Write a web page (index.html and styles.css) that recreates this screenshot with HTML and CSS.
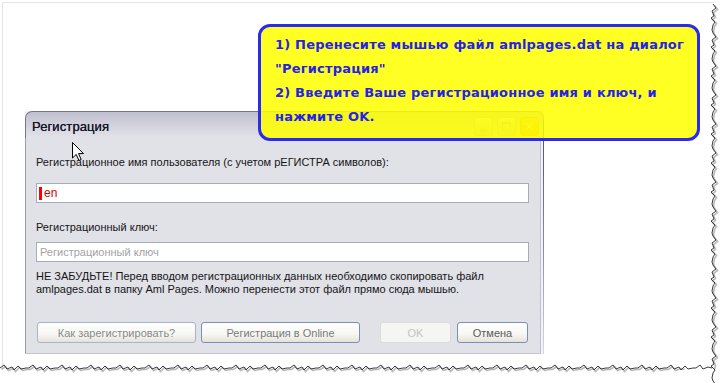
FILE: index.html
```html
<!DOCTYPE html>
<html lang="ru">
<head>
<meta charset="utf-8">
<title>Регистрация</title>
<link rel="stylesheet" href="styles.css">
</head>
<body>
<div class="page">
  <div class="paper">
    <div class="dialog">
      <div class="titlebar">
        <span class="title">Регистрация</span>
        <div class="tb-buttons">
          <span class="tb tb-min"><i></i></span>
          <span class="tb tb-max"><i></i></span>
          <span class="tb tb-close">✕</span>
        </div>
      </div>
      <div class="dlg-body">
        <div class="label">Регистрационное имя пользователя (с учетом рЕГИСТРА символов):</div>
        <div class="input input-name"><span class="caret"></span><span class="value">en</span></div>
        <div class="label label-key">Регистрационный ключ:</div>
        <div class="input input-key"><span class="placeholder">Регистрационный ключ</span></div>
        <p class="notice">НЕ ЗАБУДЬТЕ! Перед вводом регистрационных данных необходимо скопировать файл<br>amlpages.dat в папку Aml Pages. Можно перенести этот файл прямо сюда мышью.</p>
        <div class="buttons">
          <span class="btn btn-how">Как зарегистрировать?</span>
          <span class="btn btn-online">Регистрация в Online</span>
          <span class="btn btn-ok">OK</span>
          <span class="btn btn-cancel">Отмена</span>
        </div>
      </div>
    </div>
  </div>

  <div class="callout">
    <p>1) Перенесите мышью файл amlpages.dat на диалог<br>"Регистрация"<br>2) Введите Ваше регистрационное имя и ключ, и<br>нажмите OK.</p>
  </div>

  <svg class="cursor" width="13" height="20" viewBox="0 0 13 20">
    <path d="M0.5 0.5 L0.5 16 L4.2 12.5 L7 18.5 L9.2 17.5 L6.5 11.6 L11.5 11.6 Z" fill="#fff" stroke="#000" stroke-width="1"/>
  </svg>

  <svg class="torn" width="726" height="383" viewBox="0 0 726 383">
    <g transform="translate(1.5 1.5)" fill="none" stroke="#9a9a9a" stroke-width="1.6" opacity="0.7">
      <path d="M0 368 l4 -3 l3 4 l5 -2 l2 3 l4 -4 l3 3 l5 -1 l3 0 l4 -3 l3 4 l5 -2 l2 3 l4 -4 l3 3 l5 -1 l3 0 l4 -3 l3 4 l5 -2 l2 3 l4 -4 l3 3 l5 -1 l3 0 l4 -3 l3 4 l5 -2 l2 3 l4 -4 l3 3 l5 -1 l3 0 l4 -3 l3 4 l5 -2 l2 3 l4 -4 l3 3 l5 -1 l3 0 l4 -3 l3 4 l5 -2 l2 3 l4 -4 l3 3 l5 -1 l3 0 l4 -3 l3 4 l5 -2 l2 3 l4 -4 l3 3 l5 -1 l3 0 l4 -3 l3 4 l5 -2 l2 3 l4 -4 l3 3 l5 -1 l3 0 l4 -3 l3 4 l5 -2 l2 3 l4 -4 l3 3 l5 -1 l3 0 l4 -3 l3 4 l5 -2 l2 3 l4 -4 l3 3 l5 -1 l3 0 l4 -3 l3 4 l5 -2 l2 3 l4 -4 l3 3 l5 -1 l3 0 l4 -3 l3 4 l5 -2 l2 3 l4 -4 l3 3 l5 -1 l3 0 l4 -3 l3 4 l5 -2 l2 3 l4 -4 l3 3 l5 -1 l3 0 l4 -3 l3 4 l5 -2 l2 3 l4 -4 l3 3 l5 -1 l3 0 l4 -3 l3 4 l5 -2 l2 3 l4 -4 l3 3 l5 -1 l3 0 l4 -3 l3 4 l5 -2 l2 3 l4 -4 l3 3 l5 -1 l3 0 l4 -3 l3 4 l5 -2 l2 3 l4 -4 l3 3 l5 -1 l3 0 l4 -3 l3 4 l5 -2 l2 3 l4 -4 l3 3 l5 -1 l3 0 l4 -3 l3 4 l5 -2 l2 3 l4 -4 l3 3 l5 -1 l3 0 l4 -3 l3 4 l5 -2 l2 3 l4 -4 l3 3 l5 -1 l3 0 l4 -3 l3 4 l5 -2 l2 3 l4 -4 l3 3 l5 -1 l3 0 l4 -3 l3 4 l5 -2 l2 3 l4 -4 l3 3 l5 -1 l3 0 l4 -3 l3 4 l5 -2 l2 3 l4 -4 l3 3 l5 -1 l3 0 l4 -3 l3 4 l5 -2 l4 1"/>
      <path d="M713 4 l3 4 l-4 3 l2 5 l-3 2 l4 4 l-2 3 l-1 5 l1 3 l3 4 l-4 3 l2 5 l-3 2 l4 4 l-2 3 l-1 5 l1 3 l3 4 l-4 3 l2 5 l-3 2 l4 4 l-2 3 l-1 5 l1 3 l3 4 l-4 3 l2 5 l-3 2 l4 4 l-2 3 l-1 5 l1 3 l3 4 l-4 3 l2 5 l-3 2 l4 4 l-2 3 l-1 5 l1 3 l3 4 l-4 3 l2 5 l-3 2 l4 4 l-2 3 l-1 5 l1 3 l3 4 l-4 3 l2 5 l-3 2 l4 4 l-2 3 l-1 5 l1 3 l3 4 l-4 3 l2 5 l-3 2 l4 4 l-2 3 l-1 5 l1 3 l3 4 l-4 3 l2 5 l-3 2 l4 4 l-2 3 l-1 5 l1 3 l3 4 l-4 3 l2 5 l-3 2 l4 4 l-2 3 l-1 5 l1 3 l3 4 l-4 3 l2 5 l-3 2 l4 4 l-2 3 l-1 5 l1 3 l3 4 l-4 3 l2 5 l-3 2 l4 4 l-2 3 l-1 5 l1 3 l3 4 l-4 3 l2 5 l-1 4"/>
    </g>
    <g fill="none" stroke="#3a3a3a" stroke-width="1">
      <path d="M0 368 l4 -3 l3 4 l5 -2 l2 3 l4 -4 l3 3 l5 -1 l3 0 l4 -3 l3 4 l5 -2 l2 3 l4 -4 l3 3 l5 -1 l3 0 l4 -3 l3 4 l5 -2 l2 3 l4 -4 l3 3 l5 -1 l3 0 l4 -3 l3 4 l5 -2 l2 3 l4 -4 l3 3 l5 -1 l3 0 l4 -3 l3 4 l5 -2 l2 3 l4 -4 l3 3 l5 -1 l3 0 l4 -3 l3 4 l5 -2 l2 3 l4 -4 l3 3 l5 -1 l3 0 l4 -3 l3 4 l5 -2 l2 3 l4 -4 l3 3 l5 -1 l3 0 l4 -3 l3 4 l5 -2 l2 3 l4 -4 l3 3 l5 -1 l3 0 l4 -3 l3 4 l5 -2 l2 3 l4 -4 l3 3 l5 -1 l3 0 l4 -3 l3 4 l5 -2 l2 3 l4 -4 l3 3 l5 -1 l3 0 l4 -3 l3 4 l5 -2 l2 3 l4 -4 l3 3 l5 -1 l3 0 l4 -3 l3 4 l5 -2 l2 3 l4 -4 l3 3 l5 -1 l3 0 l4 -3 l3 4 l5 -2 l2 3 l4 -4 l3 3 l5 -1 l3 0 l4 -3 l3 4 l5 -2 l2 3 l4 -4 l3 3 l5 -1 l3 0 l4 -3 l3 4 l5 -2 l2 3 l4 -4 l3 3 l5 -1 l3 0 l4 -3 l3 4 l5 -2 l2 3 l4 -4 l3 3 l5 -1 l3 0 l4 -3 l3 4 l5 -2 l2 3 l4 -4 l3 3 l5 -1 l3 0 l4 -3 l3 4 l5 -2 l2 3 l4 -4 l3 3 l5 -1 l3 0 l4 -3 l3 4 l5 -2 l2 3 l4 -4 l3 3 l5 -1 l3 0 l4 -3 l3 4 l5 -2 l2 3 l4 -4 l3 3 l5 -1 l3 0 l4 -3 l3 4 l5 -2 l2 3 l4 -4 l3 3 l5 -1 l3 0 l4 -3 l3 4 l5 -2 l2 3 l4 -4 l3 3 l5 -1 l3 0 l4 -3 l3 4 l5 -2 l2 3 l4 -4 l3 3 l5 -1 l3 0 l4 -3 l3 4 l5 -2 l2 3 l4 -4 l3 3 l5 -1 l3 0 l4 -3 l3 4 l5 -2 l4 1"/>
      <path d="M713 4 l3 4 l-4 3 l2 5 l-3 2 l4 4 l-2 3 l-1 5 l1 3 l3 4 l-4 3 l2 5 l-3 2 l4 4 l-2 3 l-1 5 l1 3 l3 4 l-4 3 l2 5 l-3 2 l4 4 l-2 3 l-1 5 l1 3 l3 4 l-4 3 l2 5 l-3 2 l4 4 l-2 3 l-1 5 l1 3 l3 4 l-4 3 l2 5 l-3 2 l4 4 l-2 3 l-1 5 l1 3 l3 4 l-4 3 l2 5 l-3 2 l4 4 l-2 3 l-1 5 l1 3 l3 4 l-4 3 l2 5 l-3 2 l4 4 l-2 3 l-1 5 l1 3 l3 4 l-4 3 l2 5 l-3 2 l4 4 l-2 3 l-1 5 l1 3 l3 4 l-4 3 l2 5 l-3 2 l4 4 l-2 3 l-1 5 l1 3 l3 4 l-4 3 l2 5 l-3 2 l4 4 l-2 3 l-1 5 l1 3 l3 4 l-4 3 l2 5 l-3 2 l4 4 l-2 3 l-1 5 l1 3 l3 4 l-4 3 l2 5 l-3 2 l4 4 l-2 3 l-1 5 l1 3 l3 4 l-4 3 l2 5 l-3 2 l4 4 l-2 3 l-1 5 l1 3 l3 4 l-4 3 l2 5 l-1 4"/>
    </g>
  </svg>
</div>
</body>
</html>
```

FILE: styles.css
```css
html, body {
  margin: 0;
  padding: 0;
  background: #ffffff;
}

body {
  font-family: "Liberation Sans", Arial, sans-serif;
  color: #111;
}

.page {
  position: relative;
  width: 726px;
  height: 383px;
  overflow: hidden;
  padding: 2px 0 0 2px;
  box-sizing: border-box;
}

.paper {
  width: 712px;
  height: 367px;
  border-top: 1px solid #e4e4e4;
  border-left: 1px solid #e4e4e4;
  padding: 108px 0 0 22px;
  box-sizing: border-box;
}

/* ---------- dialog ---------- */
.dialog {
  position: relative;
  width: 519px;
  height: 243px;
  display: flex;
  flex-direction: column;
  background: #f2f2f6;
}

.dialog::after {
  content: "";
  position: absolute;
  right: 0;
  top: 9px;
  bottom: 0;
  width: 1px;
  background: linear-gradient(#4a4d6a, #8a8ca4 55%, #d8d8e2);
}

.titlebar {
  height: 27px;
  box-sizing: border-box;
  border: 1px solid #74768e;
  border-bottom: none;
  border-radius: 7px 7px 0 0;
  background: linear-gradient(#bfc0cf 0%, #d0d0dc 45%, #e2e2ea 100%);
  display: flex;
  align-items: center;
  justify-content: space-between;
  padding: 2px 4px 0 6px;
}

.title {
  font-size: 13px;
  color: #161626;
  letter-spacing: 0.1px;
  text-shadow: 0 0 0.4px #161626;
}

.tb-buttons {
  display: flex;
  gap: 4px;
}

.tb {
  width: 19px;
  height: 19px;
  box-sizing: border-box;
  border: 1px solid #b4b6c4;
  border-radius: 3px;
  background: linear-gradient(#e6e6ee, #c8c8d4);
  display: flex;
  align-items: center;
  justify-content: center;
  position: relative;
}

.tb-min i {
  width: 7px;
  height: 3px;
  background: #b0b0b8;
  margin-top: 8px;
}

.tb-max i {
  width: 9px;
  height: 9px;
  box-sizing: border-box;
  border: 1px solid #b0b0b8;
  border-top-width: 2px;
}

.tb-close {
  background: linear-gradient(#e8b860, #d49a30);
  border-color: #c89040;
  color: #f4e4a0;
  font-size: 13px;
  font-family: "DejaVu Sans", sans-serif;
}

.dlg-body {
  flex: 1;
  margin-right: 3px;
  background: #e1e1e8;
  border-left: 1px solid #9c9caf;
  border-bottom: 1px solid #c6c6d0;
  border-right: 1px solid #c0c0cc;
  padding: 17px 11px 10px 10px;
  display: flex;
  flex-direction: column;
}

.label {
  font-size: 11px;
  line-height: 14px;
  color: #151515;
  white-space: nowrap;
}

.input {
  height: 20px;
  box-sizing: border-box;
  border: 1px solid #a7adb8;
  background: #ffffff;
  display: flex;
  align-items: center;
  padding-left: 2px;
  margin-top: 8px;
}

.input-name {
  margin-top: 14px;
}

.label-key {
  margin-top: 17px;
}

.caret {
  width: 3px;
  height: 13px;
  background: #ff0000;
  margin-right: 2px;
}

.value {
  font-size: 12px;
  color: #e00000;
}

.placeholder {
  font-size: 11px;
  color: #a2a2a2;
  margin-left: 1px;
}

.notice {
  margin: 8px 0 0;
  font-size: 11px;
  line-height: 13px;
  color: #151515;
  white-space: nowrap;
}

.buttons {
  margin-top: auto;
  display: flex;
  padding-left: 1px;
}

.btn {
  height: 21px;
  box-sizing: border-box;
  border: 1px solid #7c8fb0;
  border-radius: 3px;
  background: linear-gradient(#ffffff 0%, #f6f6f2 60%, #e4e2da 100%);
  font-size: 11px;
  color: #6a6a6a;
  display: flex;
  align-items: center;
  justify-content: center;
}

.btn-how {
  width: 159px;
  border-color: #a8b4c8;
  color: #8a8a8a;
}

.btn-online {
  width: 159px;
  margin-left: 5px;
  color: #7a7a7a;
}

.btn-ok {
  width: 71px;
  margin-left: 20px;
  border-color: #dcdcdc;
  background: #f5f5f3;
  color: #c4c4c4;
}

.btn-cancel {
  width: 71px;
  margin-left: 6px;
  color: #5a5a5a;
}

/* ---------- overlays ---------- */
.callout {
  position: absolute;
  left: 258px;
  top: 24px;
  width: 442px;
  height: 117px;
  box-sizing: border-box;
  border: 3px solid #2a2af0;
  border-radius: 12px;
  background: rgba(255, 255, 0, 0.86);
  padding: 6px 10px 0 14px;
}

.callout p {
  margin: 0;
  font-family: "DejaVu Sans", Verdana, sans-serif;
  font-weight: bold;
  font-size: 13px;
  line-height: 24px;
  letter-spacing: 0.2px;
  color: #2323e6;
  white-space: nowrap;
}

.cursor {
  position: absolute;
  left: 72px;
  top: 142px;
}

.torn {
  position: absolute;
  left: 0;
  top: 0;
  pointer-events: none;
}
```
